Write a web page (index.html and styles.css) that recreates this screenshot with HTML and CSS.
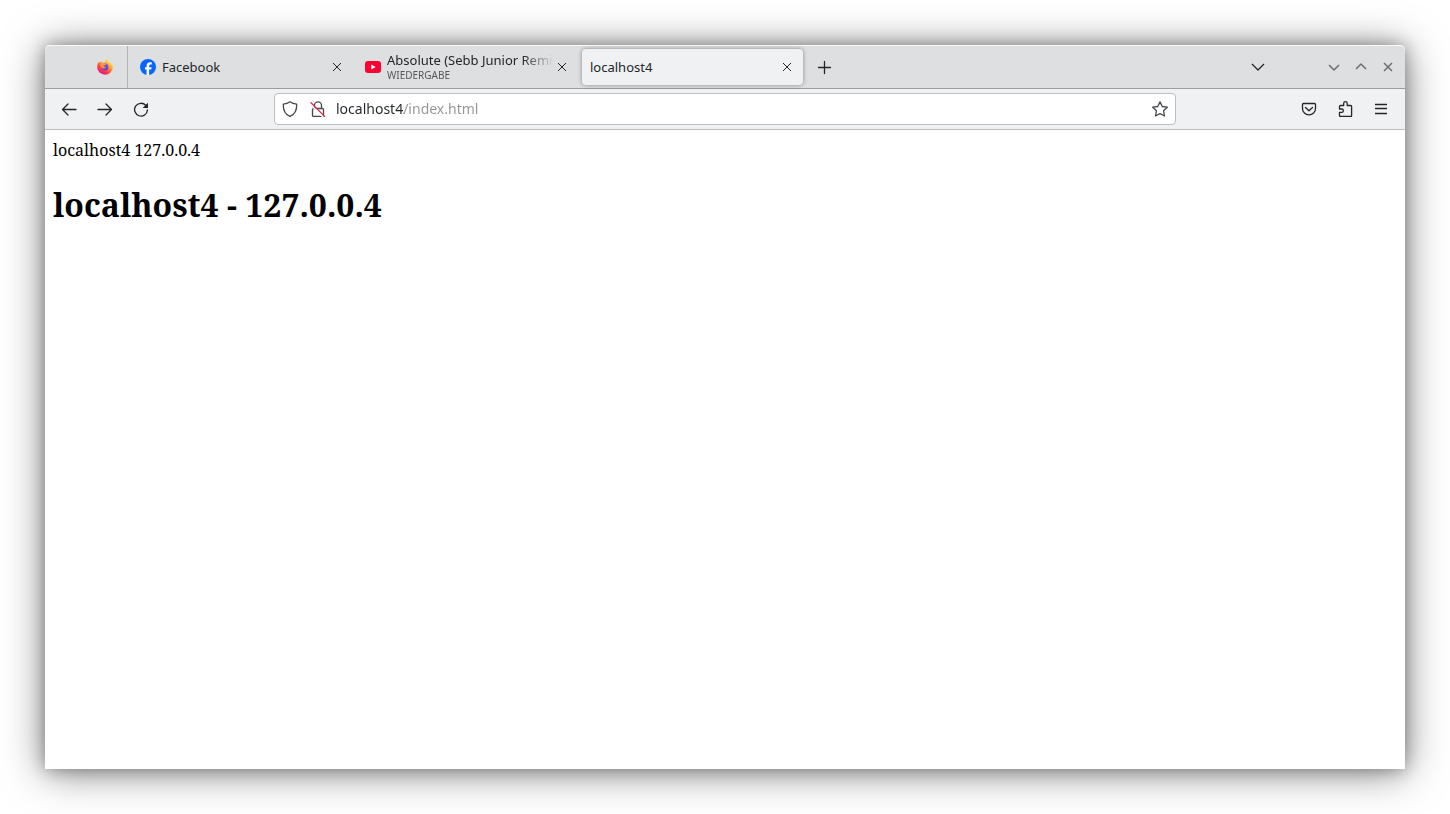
FILE: index.html
```
<!DOCTYPE html>
<html lang="de">
<head>
    <meta charset="UTF-8">
    <meta name="viewport" content="width=device-width, initial-scale=1.0">
    <title>localhost4</title>
    <link rel="stylesheet" href="styles.css">
</head>
<body>
    <div class="window">
        <header class="tab-bar">
            <div class="pinned">
                <button class="pin-btn" aria-label="Firefox">
                    <svg width="16" height="16" viewBox="0 0 16 16">
                        <defs>
                            <linearGradient id="fire" x1="0.85" y1="0.1" x2="0.25" y2="0.95">
                                <stop offset="0" stop-color="#fff04a"/>
                                <stop offset="0.35" stop-color="#ffa032"/>
                                <stop offset="0.65" stop-color="#ff4a3e"/>
                                <stop offset="1" stop-color="#e8128c"/>
                            </linearGradient>
                            <linearGradient id="globe" x1="0.3" y1="0" x2="0.7" y2="1">
                                <stop offset="0" stop-color="#a05bf0"/>
                                <stop offset="1" stop-color="#5a3fc4"/>
                            </linearGradient>
                        </defs>
                        <path fill="url(#fire)" d="M9 0.3c1.2.8 1.8 1.7 2.1 2.6.9.2 1.7.8 2.2 1.5l.3-.9c1.4 1.2 2.2 2.9 2.2 4.7A7.8 7.5 0 0 1 .2 8.3C.2 6 .9 4 2 2.8l.4 1c.5-.6 1.2-1.2 2-1.5l.1 1.4c1-.3 2.3-.2 3.2.1.1-1.3.5-2.5 1.300-3.500z"/>
                        <circle cx="8" cy="8" r="3.4" fill="url(#globe)"/>
                        <path fill="#ff9a30" d="M3.2 4.4c1.3-.7 3-.6 4 .1.6.4 1.2.5 1.9.5-.3.9-1.2 1.2-2 1.3-.7.1-.8.8-.4 1.3.6.7 1.6.8 2.5.4-.8 1.5-3 1.9-4.4.7C3.6 7.7 3 6 3.2 4.4z"/>
                    </svg>
                </button>
            </div>
            <div class="tab">
                <svg width="16" height="16" viewBox="0 0 16 16">
                    <circle cx="8" cy="8" r="8" fill="#0866ff"/>
                    <path fill="#fff" d="M6.6 15.9v-5.300H5V8.200h1.600V7.100c0-2.700 1.200-3.900 3.800-3.900.4 0 1 .1 1.400.2v2.200c-1.900-.2-2.700.1-2.700 1.700v.9h2.500l-.4 2.400H9.100v5.300z"/>
                </svg>
                <a class="tab-title" href="#">Facebook</a>
                <button class="tab-close" aria-label="Tab schließen">
                    <svg width="10" height="10" viewBox="0 0 10 10"><path d="M1 1l8 8M9 1L1 9"/></svg>
                </button>
            </div>
            <div class="tab">
                <svg width="16" height="16" viewBox="0 0 16 16">
                    <rect y="2" width="16" height="12" rx="3" fill="#ff0033"/>
                    <path fill="#fff" d="M6.3 5.5L10.700 8l-4.400 2.500z"/>
                </svg>
                <a class="tab-title fade" href="#">Absolute (Sebb Junior Remi<span class="tab-status">WIEDERGABE</span></a>
                <button class="tab-close" aria-label="Tab schließen">
                    <svg width="10" height="10" viewBox="0 0 10 10"><path d="M1 1l8 8M9 1L1 9"/></svg>
                </button>
            </div>
            <div class="tab active">
                <a class="tab-title" href="#">localhost4</a>
                <button class="tab-close" aria-label="Tab schließen">
                    <svg width="10" height="10" viewBox="0 0 10 10"><path d="M1 1l8 8M9 1L1 9"/></svg>
                </button>
            </div>
            <button class="icon-btn new-tab" aria-label="Neuer Tab">
                <svg width="16" height="16" viewBox="0 0 16 16"><path d="M8.500 2.500v12M2.500 8.500h12"/></svg>
            </button>
            <button class="icon-btn list-tabs" aria-label="Alle Tabs auflisten">
                <svg width="16" height="16" viewBox="0 0 16 16"><path d="M2 5l6 6 6-6"/></svg>
            </button>
            <div class="window-controls">
                <button aria-label="Minimieren">
                    <svg width="12" height="12" viewBox="0 0 12 12"><path d="M1 4l5 5 5-5"/></svg>
                </button>
                <button aria-label="Maximieren">
                    <svg width="12" height="12" viewBox="0 0 12 12"><path d="M1 8l5-5 5 5"/></svg>
                </button>
                <button aria-label="Schließen">
                    <svg width="12" height="12" viewBox="0 0 12 12"><path d="M2 2l8 8M10 2l-8 8"/></svg>
                </button>
            </div>
        </header>

        <nav class="nav-bar">
            <button class="icon-btn" aria-label="Zurück">
                <svg width="16" height="16" viewBox="0 0 16 16"><path d="M15 8.500H1.500M7 3L1.500 8.500 7 14"/></svg>
            </button>
            <button class="icon-btn" aria-label="Vor">
                <svg width="16" height="16" viewBox="0 0 16 16"><path d="M1 8.500h13.500M9 3l5.500 5.500L9 14"/></svg>
            </button>
            <button class="icon-btn" aria-label="Neu laden">
                <svg width="16" height="16" viewBox="0 0 16 16">
                    <path d="M12.700 4.300A6.400 6.400 0 1 0 14.400 9"/>
                    <path class="solid" d="M15 1.700v4.800a.5.500 0 0 1-.5.500H9.700z"/>
                </svg>
            </button>
            <div class="spacer"></div>
            <div class="url-bar">
                <button class="url-btn" aria-label="Schutz">
                    <svg width="16" height="16" viewBox="0 0 16 16"><path d="M8 .8C6.300 2 3.700 2.900 1.300 3.200c-.2 5 .8 9.800 6.700 12.100 5.900-2.300 6.900-7.100 6.700-12.100C12.300 2.900 9.700 2 8 .8z"/></svg>
                </button>
                <button class="url-btn" aria-label="Verbindung nicht sicher">
                    <svg width="16" height="16" viewBox="0 0 16 16">
                        <path d="M4.500 7.500V4.400a3.500 3.500 0 0 1 7 0v3.100M3 7.500h9.500a1 1 0 0 1 1 1v5.900a1 1 0 0 1-1 1h-9a1 1 0 0 1-1-1V8.500"/>
                        <path class="slash-gap" d="M.5 3.500l12.500 12.500"/>
                        <path class="slash" d="M1 1.800l13.600 13.600"/>
                    </svg>
                </button>
                <input class="url-input" type="text" value="localhost4/index.html" aria-label="Adresse" spellcheck="false">
                <button class="url-btn" aria-label="Lesezeichen">
                    <svg width="16" height="16" viewBox="0 0 16 16"><path d="M8 .9l2.200 4.600 5.100.7-3.700 3.600.9 5.200L8 12.600 3.500 15l.9-5.200L.7 6.200l5.100-.7z"/></svg>
                </button>
            </div>
            <div class="spacer"></div>
            <button class="icon-btn" aria-label="In Pocket speichern">
                <svg width="16" height="16" viewBox="0 0 16 16">
                    <path d="M2.600 2.500h10.800a1.100 1.100 0 0 1 1.100 1.100v4a6.500 6.300 0 0 1-13 0v-4a1.100 1.100 0 0 1 1.100-1.100z"/>
                    <path d="M4.500 6.500L8 9.800l3.500-3.300"/>
                </svg>
            </button>
            <button class="icon-btn" aria-label="Erweiterungen">
                <svg width="16" height="16" viewBox="0 0 16 16">
                    <path d="M3.500 15.500a1 1 0 0 1-1-1v-3.200h2.200a1.600 1.600 0 0 0 0-3.300H2.500V5.500a1 1 0 0 1 1-1h3.200V2.400a1.700 1.700 0 0 1 3.500 0v2.100h3.400a1 1 0 0 1 1 1v9a1 1 0 0 1-1 1z"/>
                </svg>
            </button>
            <button class="icon-btn menu-btn" aria-label="Menü">
                <svg width="16" height="16" viewBox="0 0 16 16"><path d="M2 3.500h12M2 7.500h12M2 12.500h12"/></svg>
            </button>
        </nav>

        <main class="page">
            localhost4 127.0.0.4
            <h1>localhost4 - 127.0.0.4</h1>
        </main>
    </div>
</body>
</html>
```
FILE: styles.css
```
* {
    box-sizing: border-box;
}
body {
    margin: 0;
    padding: 45px;
    min-height: 100vh;
    display: flex;
    background-color: #ffffff;
    font-family: "Noto Sans", sans-serif;
    color: #232629;
}
button {
    display: flex;
    align-items: center;
    justify-content: center;
    flex: none;
    padding: 0;
    border: none;
    background: none;
    color: inherit;
    cursor: pointer;
}
svg {
    flex: none;
    display: block;
}
button svg {
    fill: none;
    stroke: currentColor;
    stroke-width: 1.3;
    stroke-linecap: round;
    stroke-linejoin: round;
}
.window {
    flex: 1;
    min-width: 0;
    display: flex;
    flex-direction: column;
    border-radius: 5px 5px 0 0;
    background-color: #ffffff;
    box-shadow: 0 3px 40px rgba(0, 0, 0, 0.5), 0 0 16px rgba(0, 0, 0, 0.3);
}
.tab-bar {
    display: flex;
    align-items: center;
    height: 44px;
    padding-right: 4px;
    border-top: 1px solid #fafafa;
    border-bottom: 1px solid #9c9d9e;
    border-radius: 5px 5px 0 0;
    background-color: #dedfe1;
}
.pinned {
    display: flex;
    align-items: center;
    justify-content: flex-end;
    align-self: stretch;
    width: 83px;
    padding-right: 14px;
    margin-right: 2px;
    border-right: 1px solid #b2b3b5;
}
.pin-btn svg {
    stroke: none;
}
.tab {
    display: flex;
    align-items: center;
    flex: 0 1 221px;
    min-width: 0;
    height: 36px;
    margin: 0 2px;
    padding: 0 8px;
    border-radius: 4px;
}
.tab.active {
    background-color: #f0f1f3;
    box-shadow: 0 0 4px rgba(0, 0, 0, 0.4);
}
.tab-title {
    flex: 1;
    min-width: 0;
    overflow: hidden;
    white-space: nowrap;
    font-size: 13px;
    line-height: 16px;
    color: inherit;
    text-decoration: none;
}
.tab svg + .tab-title {
    margin-left: 6px;
}
.fade {
    -webkit-mask-image: linear-gradient(to left, transparent, #000 32px);
    mask-image: linear-gradient(to left, transparent, #000 32px);
}
.tab-status {
    display: block;
    font-size: 10px;
    line-height: 14px;
    color: #55585b;
}
.tab-close {
    width: 16px;
    height: 24px;
}
.tab-close svg {
    stroke-width: 1;
    stroke-linecap: butt;
}
.icon-btn {
    width: 32px;
    height: 32px;
}
.new-tab {
    margin-left: 3px;
}
.list-tabs {
    margin-left: auto;
    margin-right: 46px;
}
.list-tabs svg,
.menu-btn svg {
    stroke-linecap: butt;
}
.window-controls {
    display: flex;
    color: #6b6d70;
}
.window-controls button {
    width: 27px;
    height: 32px;
}
.window-controls svg {
    stroke-width: 1.5;
    stroke-linecap: butt;
}
.nav-bar {
    display: flex;
    align-items: center;
    gap: 4px;
    height: 41px;
    padding: 0 8px;
    border-bottom: 1px solid #bdbebf;
    background-color: #f0f1f3;
}
.solid {
    fill: currentColor;
    stroke: none;
}
.spacer {
    flex: 0 1 109px;
}
.url-bar {
    display: flex;
    align-items: center;
    flex: 1;
    min-width: 0;
    height: 32px;
    padding: 0 1px;
    border: 1px solid #bdbebf;
    border-radius: 4px;
    background-color: #ffffff;
}
.url-btn {
    width: 28px;
    height: 28px;
    color: #45484b;
}
.slash-gap {
    stroke: #ffffff;
    stroke-width: 1.5;
}
.slash {
    stroke: #e22850;
}
/* host part dark, path part grey */
.url-input {
    flex: 1;
    min-width: 0;
    height: 28px;
    margin-left: 4px;
    padding: 0 0 2px;
    border: none;
    outline: none;
    font-family: inherit;
    font-size: 14px;
    background: linear-gradient(to right, #232629 68px, #929496 68px);
    -webkit-background-clip: text;
    background-clip: text;
    color: transparent;
    caret-color: #232629;
}
.page {
    flex: 1;
    padding: 8px;
    font-family: "Noto Serif", "Liberation Serif", serif;
    font-size: 16px;
    line-height: 24px;
    color: #000000;
}
.page h1 {
    margin: 20px 0;
    font-size: 32px;
    line-height: 46px;
}
```
